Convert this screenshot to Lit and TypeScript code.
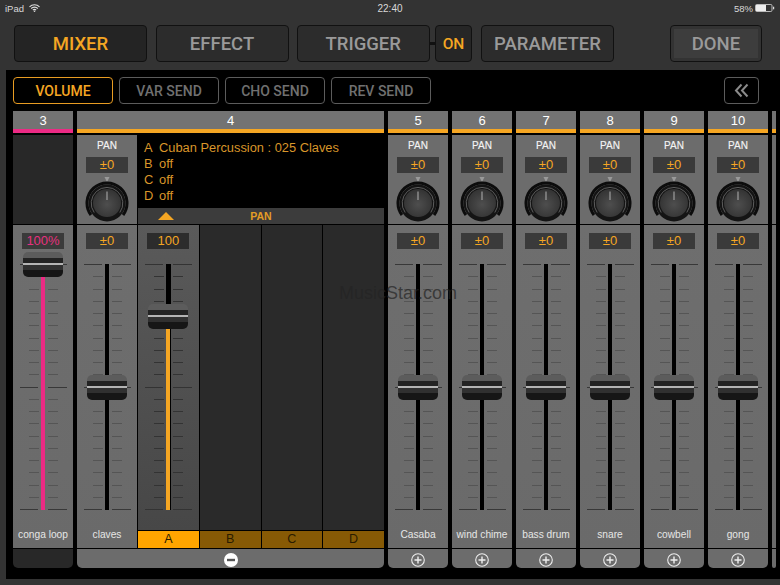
import { LitElement, html, css, svg } from "lit";
import { customElement } from "lit/decorators.js";

const knob = svg`<svg class="knob" viewBox="0 0 44 52" width="44" height="52">
  <defs>
    <radialGradient id="kb" cx="50%" cy="55%" r="55%">
      <stop offset="0" stop-color="#4e4e4e"/>
      <stop offset="1" stop-color="#333"/>
    </radialGradient>
  </defs>
  <polygon points="19.5,2 24.5,2 22,7" fill="#9a9a9a"/>
  <path d="M6 40 A20 20 0 1 1 38 40" fill="none" stroke="#0c0c0c" stroke-width="3"/>
  <circle cx="22" cy="28" r="18.5" fill="#141414"/>
  <path d="M9.2 37.5 A15.8 15.8 0 1 1 34.8 37.5" fill="none" stroke="#6e6e6e" stroke-width=".8"/>
  <circle cx="22" cy="28" r="14" fill="url(#kb)"/>
  <line x1="22" y1="16.5" x2="22" y2="25" stroke="#a8a8a8" stroke-width="1.1"/>
</svg>`;

function ticks() {
  const out = [];
  for (let i = 0; i <= 20; i++) {
    const long = i === 0 || i === 10 || i === 20;
    out.push(html`<div class="tick ${long ? "long" : ""}"><i></i><i></i></div>`);
  }
  return out;
}

function fader(value: string, pos: number, color: string | null, valueClass = "") {
  const fill = color
    ? html`<div class="fill" style="top:${pos}px;background:${color}"></div>`
    : "";
  return html`<div class="val ${valueClass}">${value}</div>
    <div class="fader">
      ${ticks()}
      <div class="track"></div>
      ${fill}
      <div class="cap" style="top:${pos - 12}px"></div>
    </div>`;
}

@customElement("app-root")
export class AppRoot extends LitElement {
  static styles = css`
    :host {
      display: block;
      width: 780px;
      height: 585px;
      overflow: hidden;
      background: #333;
      font-family: "Liberation Sans", Arial, sans-serif;
      color: #fff;
    }
    .status {
      height: 16px;
      display: grid;
      grid-template-columns: 1fr auto 1fr;
      align-items: center;
      padding: 0 5px;
      font-size: 9.5px;
      color: #d8d8d8;
    }
    .status .l { display: flex; gap: 5px; align-items: center; }
    .status .c { font-size: 10px; }
    .status .r { display: flex; gap: 2px; align-items: center; justify-content: flex-end; }
    .top {
      height: 37px;
      margin-top: 9px;
      padding-left: 14px;
      display: flex;
      align-items: stretch;
    }
    .btn {
      box-sizing: border-box;
      display: flex;
      align-items: center;
      justify-content: center;
      border: 1.5px solid #111;
      border-radius: 4px;
      background: #2c2c2c;
      color: #9a9a9a;
      font-family: Roboto, "Liberation Sans", sans-serif;
      font-size: 18.5px;
      font-weight: 500;
    }
    .btn.w { width: 133px; margin-right: 8.5px; }
    .btn.mixer { background: #242424; color: #f5a623; }
    .btn.w.trig { width: 132.5px; margin-right: 0; }
    .link { width: 5.5px; height: 3px; background: #111; align-self: center; }
    .btn.on { width: 37px; margin-right: 9px; background: #262626; color: #f5a623; font-size: 15.5px; }
    .btn.w.param { margin-right: 0; }
    .btn.done { width: 92px; margin-left: 56px; background: #3d3d3d; box-shadow: inset 0 0 0 3px #333; }
    .main {
      box-sizing: border-box;
      margin: 8px 0 0 6px;
      height: 509px;
      background: #000;
      padding: 7px 0 0 7px;
      overflow: hidden;
    }
    .tabs { display: flex; gap: 6px; height: 27px; }
    .tab {
      box-sizing: border-box;
      width: 100px;
      display: flex;
      align-items: center;
      justify-content: center;
      border: 1.5px solid #5c5c5c;
      border-radius: 4px;
      color: #707070;
      font-family: Roboto, "Liberation Sans", sans-serif;
      font-weight: 500;
      font-size: 14px;
    }
    .tab.sel { border-color: #e89c22; color: #f5a623; }
    .collapse {
      box-sizing: border-box;
      width: 35px;
      margin-left: auto;
      margin-right: 21px;
      border: 1.5px solid #5c5c5c;
      border-radius: 4px;
      display: flex;
      align-items: center;
      justify-content: center;
    }
    .strips { display: flex; gap: 4px; margin-top: 7px; position: relative; }
    .strip { width: 60px; flex: none; display: flex; flex-direction: column; }
    .strip.wide { width: 307px; }
    .strip.sliver { width: 3.5px; }
    .head {
      box-sizing: border-box;
      height: 22px;
      background: #737373;
      border-bottom: 4px solid #f5a623;
      margin-bottom: 2px;
      text-align: center;
      font-size: 13px;
      line-height: 19px;
      color: #fff;
    }
    .head.pink { border-color: #ec2a84; }
    .row { display: flex; gap: 1px; }
    .upper {
      box-sizing: border-box;
      height: 89px;
      background: #6c6c6c;
      display: flex;
      flex-direction: column;
      align-items: center;
      padding-top: 5px;
    }
    .upper.fixed { width: 60px; flex: none; }
    .upper.empty { background: #282828; }
    .pan { font-size: 10px; line-height: 11px; color: #f4f4f4; height: 11px; -webkit-text-stroke: 0.15px currentColor; }
    .upper .val { margin-top: 6px; }
    .knob { display: block; margin-top: 2px; flex: none; }
    .lower {
      box-sizing: border-box;
      height: 323px;
      margin-top: 1px;
      background: linear-gradient(#6e6e6e, #6a6a6a);
      display: flex;
      flex-direction: column;
      align-items: center;
      padding-top: 8px;
    }
    .val {
      box-sizing: border-box;
      width: 42px;
      height: 16px;
      background: #3a3a3a;
      color: #f5a623;
      font-size: 13px;
      line-height: 16px;
      text-align: center;
      flex: none;
    }
    .val.pink { color: #e6317f; }
    .fader {
      position: relative;
      width: 47px;
      height: 246px;
      margin-top: 15px;
      display: flex;
      flex-direction: column;
      justify-content: space-between;
      flex: none;
    }
    .tick { height: 1px; display: flex; justify-content: space-between; padding: 0 9px; }
    .tick i { width: 10px; background: #555; display: block; }
    .tick.long { padding: 0; }
    .tick.long i { width: 18.5px; background: #383838; }
    .track { position: absolute; left: 21.3px; width: 4.4px; top: 0; bottom: 0; background: #000; }
    .fill { position: absolute; left: 21.5px; width: 4px; bottom: 0; }
    .cap {
      position: absolute;
      left: 3.5px;
      width: 40px;
      height: 25px;
      border-radius: 5px;
      background: linear-gradient(#5c5c5c 0 6px, #232323 6px 11px, #b4b4b4 11px 13px, #303030 13px 18px, #161616 18px);
    }
    .name {
      margin-top: auto;
      height: 21px;
      font-size: 10.2px;
      line-height: 16px;
      color: #e6e6e6;
      white-space: nowrap;
    }
    .foot {
      box-sizing: border-box;
      height: 19px;
      margin-top: 1px;
      padding-top: 2px;
      background: #6c6c6c;
      border-radius: 0 0 5px 5px;
      display: flex;
      align-items: center;
      justify-content: center;
    }
    .foot.empty { background: #282828; }
    .info {
      width: 246px;
      height: 89px;
      display: flex;
      flex-direction: column;
    }
    .lines {
      flex: 1;
      background: #000;
      color: #d9962a;
      font-size: 12.85px;
      line-height: 16px;
      padding: 5px 0 0 6px;
    }
    .lines div { display: flex; }
    .lines span { width: 15px; flex: none; }
    .subhead {
      height: 16px;
      background: #3c3c3c;
      display: flex;
      align-items: center;
      position: relative;
      justify-content: center;
      color: #e39c25;
      font-size: 10.5px;
      font-weight: 700;
    }
    .tri {
      position: absolute;
      left: 20px;
      top: 4px;
      width: 0;
      height: 0;
      border-left: 8px solid transparent;
      border-right: 8px solid transparent;
      border-bottom: 8px solid #f5a623;
    }
    .lowerwide { display: flex; gap: 1px; margin-top: 1px; height: 323px; }
    .lowerwide > .lower { margin-top: 0; width: 60px; flex: none; }
    .chs { display: flex; flex-direction: column; flex: 1; }
    .chtop { display: flex; gap: 1px; flex: 1; }
    .ch {
      flex: 1;
      background: #2a2a2a;
      display: flex;
      flex-direction: column;
      align-items: center;
      padding-top: 8px;
    }
    .ch.a { background: linear-gradient(#5a5a5a, #474747); }
    .ch.a .val { background: #2c2c2c; }
    .ch.a .tick i { background: #333; }
    .chbtns { display: flex; gap: 1px; height: 17px; margin-top: 1px; }
    .chb {
      flex: 1;
      background: #875a05;
      color: #2a1c00;
      font-size: 12.5px;
      line-height: 17px;
      text-align: center;
    }
    .chb.on { background: #ffa500; }
    .mark {
      position: absolute;
      left: 326px;
      top: 172px;
      font-size: 18px;
      color: rgba(35, 35, 35, 0.7);
      white-space: nowrap;
      pointer-events: none;
    }
  `;

  strip(n: string, name: string) {
    return html`<div class="strip">
      <div class="head">${n}</div>
      <div class="upper">
        <div class="pan">PAN</div>
        <div class="val">±0</div>
        ${knob}
      </div>
      <div class="lower">
        ${fader("±0", 123, null)}
        <div class="name">${name}</div>
      </div>
      <div class="foot">
        <svg width="14" height="14" viewBox="0 0 14 14"><circle cx="7" cy="7" r="6.3" fill="none" stroke="#eee" stroke-width="1.1"/><path d="M3.5 7h7M7 3.5v7" stroke="#eee" stroke-width="1.4"/></svg>
      </div>
    </div>`;
  }

  render() {
    return html`
      <div class="status">
        <div class="l">iPad
          <svg width="11" height="8" viewBox="0 0 11 8"><path d="M0.5 2.8a7 7 0 0 1 10 0M2.2 4.5a4.6 4.6 0 0 1 6.6 0M3.9 6.1a2.2 2.2 0 0 1 3.2 0" fill="none" stroke="#e0e0e0" stroke-width="1.1"/><circle cx="5.5" cy="7.2" r=".8" fill="#e0e0e0"/></svg>
        </div>
        <div class="c">22:40</div>
        <div class="r">58%
          <svg width="20" height="8" viewBox="0 0 20 8"><rect x=".5" y=".5" width="16.5" height="7" rx="1.2" fill="none" stroke="#ddd" stroke-width=".8"/><rect x="1" y="1" width="10" height="6" fill="#eee"/><rect x="18" y="2.7" width="1.2" height="2.6" fill="#ddd"/></svg>
        </div>
      </div>
      <div class="top">
        <div class="btn w mixer">MIXER</div>
        <div class="btn w">EFFECT</div>
        <div class="btn w trig">TRIGGER</div>
        <div class="link"></div>
        <div class="btn on">ON</div>
        <div class="btn w param">PARAMETER</div>
        <div class="btn done">DONE</div>
      </div>
      <div class="main">
        <div class="tabs">
          <div class="tab sel">VOLUME</div>
          <div class="tab">VAR SEND</div>
          <div class="tab">CHO SEND</div>
          <div class="tab">REV SEND</div>
          <div class="collapse">
            <svg width="15" height="15" viewBox="0 0 15 15"><path d="M7.5 1.5 2 7.5l5.5 6M13.5 1.5 8 7.5l5.5 6" fill="none" stroke="#8a8a8a" stroke-width="2"/></svg>
          </div>
        </div>
        <div class="strips">
          <div class="strip">
            <div class="head pink">3</div>
            <div class="upper empty"></div>
            <div class="lower">
              ${fader("100%", 0, "#ec2a84", "pink")}
              <div class="name">conga loop</div>
            </div>
            <div class="foot empty"></div>
          </div>
          <div class="strip wide">
            <div class="head">4</div>
            <div class="row">
              <div class="upper fixed">
                <div class="pan">PAN</div>
                <div class="val">±0</div>
                ${knob}
              </div>
              <div class="info">
                <div class="lines">
                  <div><span>A</span>Cuban Percussion : 025 Claves</div>
                  <div><span>B</span>off</div>
                  <div><span>C</span>off</div>
                  <div><span>D</span>off</div>
                </div>
                <div class="subhead"><div class="tri"></div>PAN</div>
              </div>
            </div>
            <div class="lowerwide">
              <div class="lower">
                ${fader("±0", 123, null)}
                <div class="name">claves</div>
              </div>
              <div class="chs">
                <div class="chtop">
                  <div class="ch a">${fader("100", 52, "#f5a623")}</div>
                  <div class="ch"></div>
                  <div class="ch"></div>
                  <div class="ch"></div>
                </div>
                <div class="chbtns">
                  <div class="chb on">A</div>
                  <div class="chb">B</div>
                  <div class="chb">C</div>
                  <div class="chb">D</div>
                </div>
              </div>
            </div>
            <div class="foot">
              <svg width="14" height="14" viewBox="0 0 14 14"><circle cx="7" cy="7" r="7" fill="#fff"/><rect x="3" y="5.8" width="8" height="2.4" fill="#555"/></svg>
            </div>
          </div>
          ${this.strip("5", "Casaba")}
          ${this.strip("6", "wind chime")}
          ${this.strip("7", "bass drum")}
          ${this.strip("8", "snare")}
          ${this.strip("9", "cowbell")}
          ${this.strip("10", "gong")}
          <div class="strip sliver"><div class="head"></div><div class="upper"></div><div class="lower"></div><div class="foot"></div></div>
          <div class="mark">MusicStar.com</div>
        </div>
      </div>
    `;
  }
}
